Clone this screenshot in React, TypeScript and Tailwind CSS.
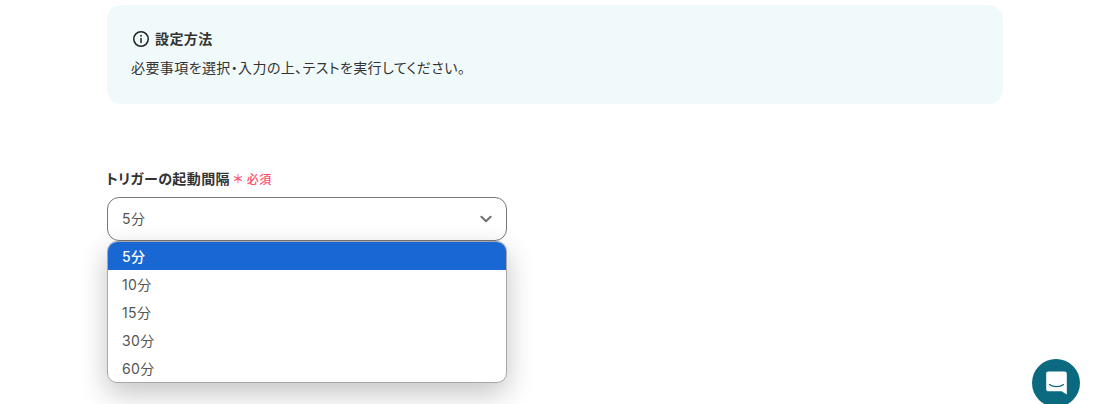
const options = ["5分", "10分", "15分", "30分", "60分"];

const InfoIcon = () => (
  <svg width="18" height="18" viewBox="0 0 18 18" fill="none" stroke="#222222" strokeWidth="1.5" strokeLinecap="round">
    <circle cx="9" cy="9" r="7.25" />
    <path d="M9 8.4V12.4" />
    <path d="M9 5.7V5.8" strokeWidth="1.8" />
  </svg>
);

const ChatIcon = () => (
  <svg width="21" height="24" viewBox="0 0 21 24">
    <path
      d="M2.5 0.5H18.5C19.9 0.5 20.8 1.4 20.8 2.8V23.5L15.6 20.2H2.5C1.1 20.2 0.2 19.3 0.2 17.9V2.8C0.2 1.4 1.1 0.5 2.5 0.5Z"
      fill="#ffffff"
    />
    <path d="M3.5 13.6C7 16.4 14 16.4 17.5 13.6" fill="none" stroke="#0b6a7f" strokeWidth="1.3" strokeLinecap="round" />
  </svg>
);

const ChevronIcon = () => (
  <svg width="12" height="12" viewBox="0 0 12 12" fill="none" stroke="#707070" strokeWidth="2" strokeLinecap="round" strokeLinejoin="round">
    <path d="M1.4 3.8L6 8.2L10.6 3.8" />
  </svg>
);

export default function App() {
  return (
    <div className="relative h-[404px] w-[1100px] overflow-hidden bg-white font-['Inter','Noto_Sans_CJK_JP',sans-serif] tracking-[0.025em] text-[#333333] [font-feature-settings:'palt']">
      <div className="pl-[107px] pt-[5px]">
        <div className="h-[99px] w-[896px] rounded-[14px] bg-[#f1fafa] pl-6 pt-[25px]">
          <div className="flex items-center gap-[5px] pl-[1px]">
            <InfoIcon />
            <span className="text-sm font-semibold leading-[18px] text-[#333333]">設定方法</span>
          </div>
          <p className="mt-[10px] text-sm leading-5 text-[#333333]">
            必要事項を選択・入力の上、テストを実行してください。
          </p>
        </div>

        <div className="mt-[65px] flex h-5 items-center gap-[3px]">
          <span className="-ml-[1px] text-sm font-semibold leading-5 text-[#333333]">トリガーの起動間隔</span>
          <span className="translate-y-px text-xs font-medium leading-5 text-[#ff4d6d]">＊ 必須</span>
        </div>

        <div className="relative mt-[8px] w-[400px]">
          <div className="flex h-[44px] items-center justify-between rounded-[12px] border border-[#777777] bg-white pl-[14px] pr-[14px]">
            <span className="text-sm text-[#555555]">5分</span>
            <ChevronIcon />
          </div>
          <ul className="absolute left-0 top-[44px] z-10 h-[142px] w-[400px] overflow-hidden rounded-[10px] border border-[#a8a8a8] bg-white shadow-[0_10px_28px_rgba(0,0,0,0.24)]">
            {options.map((option, i) => (
              <li
                key={option}
                className={
                  i === 0
                    ? "flex h-7 items-center bg-[#1967d2] pl-[14px] pt-[2px] text-sm font-medium text-white"
                    : "flex h-7 items-center pl-[14px] pt-[2px] text-sm text-[#555555]"
                }
              >
                {option}
              </li>
            ))}
          </ul>
        </div>
      </div>

      <div className="absolute left-[1032px] top-[359px] flex h-12 w-12 items-start justify-center rounded-full bg-[#0b6a7f] pt-3">
        <ChatIcon />
      </div>
    </div>
  );
}
